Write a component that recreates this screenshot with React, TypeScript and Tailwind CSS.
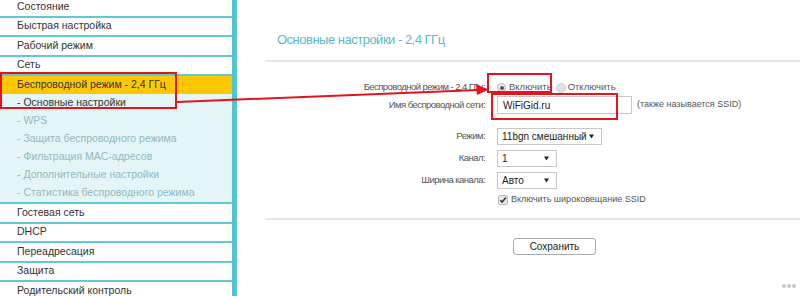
import type { ReactNode } from "react";

const FONT = { fontFamily: '"Liberation Sans", Arial, sans-serif' };

const TOP_ITEMS = ["Состояние", "Быстрая настройка", "Рабочий режим", "Сеть"];
const SUB_ITEMS = [
  "- WPS",
  "- Защита беспроводного режима",
  "- Фильтрация MAC-адресов",
  "- Дополнительные настройки",
  "- Статистика беспроводного режима",
];
const BOTTOM_ITEMS = ["Гостевая сеть", "DHCP", "Переадресация", "Защита", "Родительский контроль"];

function MenuRow({ label }: { label: string }) {
  return (
    <div className="flex h-[19.5px] shrink-0 items-center border-b-2 border-[#62c9d4] bg-white pl-[17px] text-[10.5px] text-[#333]">
      {label}
    </div>
  );
}

function Caret() {
  return (
    <svg width="5" height="5" viewBox="0 0 5 5" className="shrink-0">
      <path d="M0 0.5h5L2.5 4.5z" fill="#222" />
    </svg>
  );
}

function Select({ value, width }: { value: string; width: string }) {
  return (
    <div
      className={`flex h-[17px] items-center justify-between whitespace-nowrap border border-[#c8c8c8] bg-white pl-[4px] pr-[7px] text-[10px] text-[#222] ${width}`}
    >
      <span>{value}</span>
      <Caret />
    </div>
  );
}

function Row({ label, children, className }: { label: string; children: ReactNode; className: string }) {
  return (
    <div className={`flex items-center ${className}`}>
      <div className="w-[232px] shrink-0 whitespace-nowrap pr-[12px] text-right text-[9.5px] tracking-[-0.55px] text-[#555]">
        {label}
      </div>
      <div className="flex items-center whitespace-nowrap">{children}</div>
    </div>
  );
}

export default function App() {
  return (
    <div className="relative flex h-[296px] w-[800px] overflow-hidden bg-white" style={FONT}>
      {/* боковое меню */}
      <aside className="flex w-[237px] shrink-0 flex-col border-r-[5px] border-[#52c4d1]">
        <div className="-mt-[2px] flex flex-col">
          {TOP_ITEMS.map((t) => (
            <MenuRow key={t} label={t} />
          ))}
          <div className="flex h-[18px] items-center bg-[#ffc700] pl-[17px] text-[10.5px] text-[#333]">
            Беспроводной режим - 2,4 ГГц
          </div>
          <div className="flex flex-col border-b-2 border-[#62c9d4] bg-[#e4f5f8]">
            <div className="flex h-[18px] items-center pl-[17px] text-[10.5px] text-[#333]">
              - Основные настройки
            </div>
            {SUB_ITEMS.map((t) => (
              <div key={t} className="flex h-[18px] items-center pl-[17px] text-[10.5px] text-[#93b9be]">
                {t}
              </div>
            ))}
          </div>
          {BOTTOM_ITEMS.map((t) => (
            <MenuRow key={t} label={t} />
          ))}
        </div>
      </aside>

      {/* основная область */}
      <main className="flex-1 pl-[28px]">
        <h1 className="mt-[32px] pl-[12px] text-[13px] leading-[16px] tracking-[-0.5px] text-[#56bccb]">
          Основные настройки - 2,4 ГГц
        </h1>
        <div className="mt-[12px] h-[2px] bg-[#e6e6e6]" />

        <Row label="Беспроводной режим - 2,4 ГГц:" className="mt-[17px] h-[17px]">
          <span className="flex h-[9px] w-[9px] items-center justify-center rounded-full border border-[#b5b5b5] bg-[#eee]">
            <span className="h-[4px] w-[4px] rounded-full bg-[#555]" />
          </span>
          <span className="ml-[3px] text-[9.5px] text-[#555]">Включить</span>
          <span className="ml-[4px] h-[10px] w-[10px] rounded-full border border-[#ccc] bg-[#e2e2e2]" />
          <span className="ml-[2px] text-[9.5px] text-[#555]">Отключить</span>
        </Row>

        <Row label="Имя беспроводной сети:" className="mt-[0px] h-[18px]">
          <div className="flex h-[18px] w-[135px] items-center border border-[#c8c8c8] pl-[5px] text-[10px] text-[#222]">
            WiFiGid.ru
          </div>
          <span className="ml-[5px] text-[9px] text-[#555]">(также называется SSID)</span>
        </Row>

        <Row label="Режим:" className="mt-[13px] h-[18px]">
          <Select value="11bgn смешанный" width="w-[105px]" />
        </Row>
        <Row label="Канал:" className="mt-[4px] h-[18px]">
          <Select value="1" width="w-[60px]" />
        </Row>
        <Row label="Ширина канала:" className="mt-[4px] h-[18px]">
          <Select value="Авто" width="w-[60px]" />
        </Row>
        <Row label="" className="mt-[2px] h-[17px]">
          <svg width="10" height="10" viewBox="0 0 10 10" className="ml-[1px]">
            <rect x="0.5" y="0.5" width="9" height="9" rx="1.5" fill="#e8e8e8" stroke="#bbb" />
            <path d="M2.3 5.2l1.8 1.9 3.8-4.6" fill="none" stroke="#333" strokeWidth="1.5" />
          </svg>
          <span className="ml-[3px] text-[9px] text-[#555]">Включить широковещание SSID</span>
        </Row>

        <div className="mt-[10px] h-[2px] bg-[#e6e6e6]" />

        <div className="mt-[18px] pl-[248px]">
          <button className="flex h-[17px] w-[83px] items-center justify-center rounded-[3px] border border-[#aaa] bg-white text-[10px] text-[#222]">
            Сохранить
          </button>
        </div>
      </main>

      {/* красные пометки */}
      <div className="pointer-events-none absolute left-0 top-[72px] h-[37px] w-[177px] border-2 border-[#e3141c]" />
      <div className="pointer-events-none absolute left-[487px] top-[73px] h-[20px] w-[65px] border-2 border-[#e3141c]" />
      <div className="pointer-events-none absolute left-[491px] top-[93px] h-[27px] w-[127px] border-2 border-[#e3141c]" />
      <svg className="pointer-events-none absolute left-0 top-0" width="800" height="296">
        <line x1="177" y1="102" x2="478" y2="90" stroke="#e3141c" strokeWidth="2" />
        <path d="M489 89.5L476 84.5L477 95z" fill="#e3141c" />
      </svg>

      <div className="absolute bottom-[8px] right-[4px] flex gap-[1px]">
        <span className="h-[4px] w-[4px] rounded-full bg-[#c8c8c8]" />
        <span className="h-[4px] w-[4px] rounded-full bg-[#c8c8c8]" />
        <span className="h-[4px] w-[4px] rounded-full bg-[#c8c8c8]" />
      </div>
    </div>
  );
}
